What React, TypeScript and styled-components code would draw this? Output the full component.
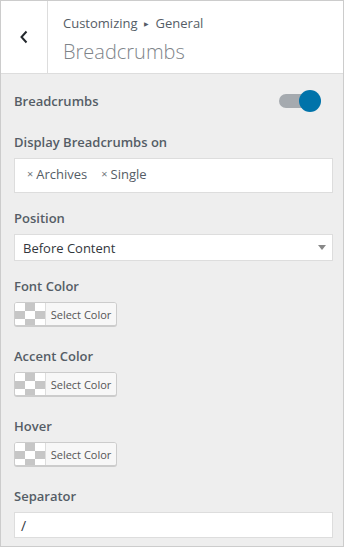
import React from 'react';
import styled, { createGlobalStyle } from 'styled-components';

const GlobalStyle = createGlobalStyle`
html, body {
  margin: 0;
  padding: 0;
  background: #eeeeee;
}
* {
  box-sizing: border-box;
}
body {
  font-family: "Open Sans", "Noto Sans", sans-serif;
  color: #555d66;
}
`

const Panel = styled.div`
width: 344px;
height: 547px;
border: 1px solid #cccccc;
background: #eeeeee;
display: flex;
flex-direction: column;
overflow: hidden;
`

const Header = styled.div`
display: flex;
height: 73px;
background: #ffffff;
border-bottom: 1px solid #dddddd;
flex-shrink: 0;
`

const BackButton = styled.div`
width: 47px;
display: flex;
align-items: center;
justify-content: center;
border-right: 1px solid #dddddd;
color: #23282d;
`

const HeaderText = styled.div`
display: flex;
flex-direction: column;
padding: 12px 0 0 15px;
`

const Crumbs = styled.span`
font-size: 13px;
line-height: 20px;
color: #555d66;
`

const Arrow = styled.span`
font-size: 6px;
margin: 0 7px 0 6px;
position: relative;
top: -2px;
`

const Title = styled.h1`
margin: 3px 0 0;
font-size: 20px;
line-height: 26px;
font-weight: 300;
color: #7e8489;
`

const Body = styled.div`
padding: 17px 10px 0 13px;
display: flex;
flex-direction: column;
`

const Section = styled.div<{ $gap: number }>`
display: flex;
flex-direction: column;
margin-bottom: ${p => p.$gap}px;
`

const Label = styled.div`
font-size: 13px;
font-weight: 600;
line-height: 20px;
color: #555d66;
margin-bottom: 6px;
`

const ToggleRow = styled.div`
display: flex;
align-items: center;
justify-content: space-between;
height: 20px;
margin-bottom: 21px;
`

const ToggleLabel = styled(Label)`
margin-bottom: 0;
`

const Toggle = styled.div`
position: relative;
width: 42px;
height: 22px;
margin-right: 12px;
`

const Track = styled.div`
position: absolute;
left: 0;
top: 4px;
width: 30px;
height: 14px;
border-radius: 7px;
background: #a5aaaf;
`

const Knob = styled.div`
position: absolute;
right: 0;
top: 0;
width: 22px;
height: 22px;
border-radius: 50%;
background: #0073aa;
`

const TagBox = styled.div`
height: 35px;
background: #ffffff;
border: 1px solid #dddddd;
display: flex;
align-items: center;
padding: 0 0 3px 12px;
gap: 14px;
`

const Tag = styled.span`
font-size: 13px;
line-height: 18px;
color: #555d66;
display: flex;
align-items: center;
gap: 3px;
`

const Remove = styled.span`
font-size: 11px;
line-height: 18px;
color: #72777c;
`

const Select = styled.div`
height: 27px;
background: #ffffff;
border: 1px solid #dddddd;
display: flex;
align-items: center;
justify-content: space-between;
padding: 0 6px 0 8px;
font-size: 13px;
color: #32373c;
`

const Caret = styled.span`
width: 0;
height: 0;
border-left: 4px solid transparent;
border-right: 4px solid transparent;
border-top: 5px solid #888888;
`

const ColorButton = styled.div`
display: flex;
width: 103px;
height: 24px;
border: 1px solid #cccccc;
border-radius: 3px;
background: #f7f7f7;
box-shadow: 0 1px 0 #cccccc;
overflow: hidden;
`

const Swatch = styled.div`
width: 31px;
height: 100%;
border-right: 1px solid #dddddd;
background-color: #ffffff;
background-image: conic-gradient(#c6c6c6 25%, #ffffff 0 50%, #c6c6c6 0 75%, #ffffff 0);
background-size: 20px 16px;
background-position: 0 0;
`

const ColorText = styled.span`
flex: 1;
display: flex;
align-items: center;
justify-content: center;
font-size: 11px;
color: #555555;
background: #f7f7f7;
`

const TextInput = styled.div`
height: 26px;
background: #ffffff;
border: 1px solid #dddddd;
display: flex;
align-items: center;
padding-left: 6px;
font-size: 14px;
color: #32373c;
`

function ChevronLeft(): JSX.Element {
    return (
        <svg width="10" height="14" viewBox="0 0 10 14">
            <path d="M7.5 1.5 L2.5 7 L7.5 12.5" fill="none" stroke="#23282d" strokeWidth="2" />
        </svg>
    )
}

function ColorPicker(): JSX.Element {
    return (
        <ColorButton>
            <Swatch />
            <ColorText>Select Color</ColorText>
        </ColorButton>
    )
}

function App(): JSX.Element {
    return (
        <>
            <GlobalStyle />
            <Panel>
                <Header>
                    <BackButton>
                        <ChevronLeft />
                    </BackButton>
                    <HeaderText>
                        <Crumbs>
                            Customizing<Arrow>▶</Arrow>General
                        </Crumbs>
                        <Title>Breadcrumbs</Title>
                    </HeaderText>
                </Header>
                <Body>
                    <ToggleRow>
                        <ToggleLabel>Breadcrumbs</ToggleLabel>
                        <Toggle>
                            <Track />
                            <Knob />
                        </Toggle>
                    </ToggleRow>
                    <Section $gap={15}>
                        <Label>Display Breadcrumbs on</Label>
                        <TagBox>
                            <Tag><Remove>×</Remove>Archives</Tag>
                            <Tag><Remove>×</Remove>Single</Tag>
                        </TagBox>
                    </Section>
                    <Section $gap={15}>
                        <Label>Position</Label>
                        <Select>
                            Before Content
                            <Caret />
                        </Select>
                    </Section>
                    <Section $gap={20}>
                        <Label>Font Color</Label>
                        <ColorPicker />
                    </Section>
                    <Section $gap={20}>
                        <Label>Accent Color</Label>
                        <ColorPicker />
                    </Section>
                    <Section $gap={20}>
                        <Label>Hover</Label>
                        <ColorPicker />
                    </Section>
                    <Section $gap={0}>
                        <Label>Separator</Label>
                        <TextInput>/</TextInput>
                    </Section>
                </Body>
            </Panel>
        </>
    )
}

export default App;
